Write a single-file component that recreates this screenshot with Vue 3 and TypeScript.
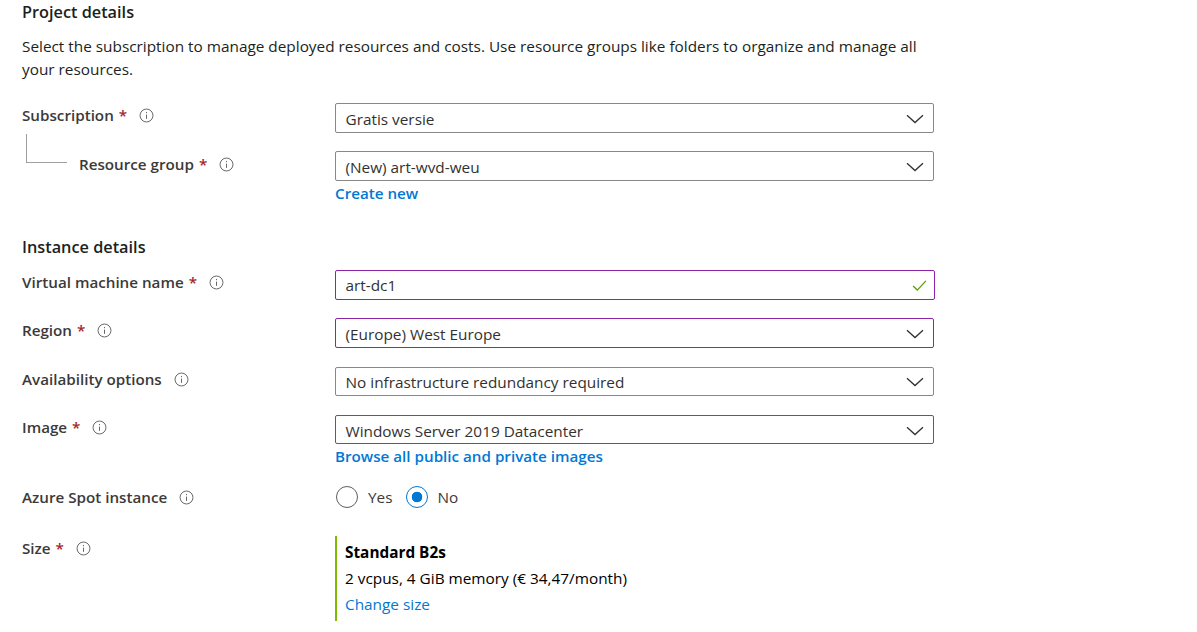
<script setup lang="ts">
interface Row { label: string; req: boolean; value: string; cls: string; sub?: boolean; link?: string; check?: boolean }
const project: Row[] = [
  { label: 'Subscription', req: true, value: 'Gratis versie', cls: 'r1' },
  { label: 'Resource group', req: true, value: '(New) art-wvd-weu', cls: 'r2', sub: true, link: 'Create new' },
]
const instance: Row[] = [
  { label: 'Virtual machine name', req: true, value: 'art-dc1', cls: 'r3 focus wide', check: true },
  { label: 'Region', req: true, value: '(Europe) West Europe', cls: 'r4 focus' },
  { label: 'Availability options', req: false, value: 'No infrastructure redundancy required', cls: 'r5' },
  { label: 'Image', req: true, value: 'Windows Server 2019 Datacenter', cls: 'r6 dark', link: 'Browse all public and private images' },
]
</script>

<template>
  <main class="page">
    <h2 class="h-project">Project details</h2>
    <p class="desc">Select the subscription to manage deployed resources and costs. Use resource groups like folders to organize and manage all your resources.</p>

    <div v-for="r in project" :key="r.label" class="row" :class="r.cls">
      <div class="label" :class="{ sub: r.sub }">
        <span v-if="r.sub" class="tree"></span>
        <span class="name">{{ r.label }}</span>
        <span v-if="r.req" class="req">*</span>
        <svg class="info" viewBox="0 0 16 16"><circle cx="8" cy="8" r="6.9" /><path d="M8 7v4.6M8 4.2v1.3" /></svg>
      </div>
      <div class="ctl">
        <div class="box"><span>{{ r.value }}</span>
          <svg class="chev" viewBox="0 0 18 10"><path d="M1 1.2l8 7.4 8-7.4" /></svg>
        </div>
        <a v-if="r.link" class="blink">{{ r.link }}</a>
      </div>
    </div>

    <h2 class="h-instance">Instance details</h2>

    <div v-for="r in instance" :key="r.label" class="row" :class="r.cls">
      <div class="label">
        <span class="name">{{ r.label }}</span>
        <span v-if="r.req" class="req">*</span>
        <svg class="info" viewBox="0 0 16 16"><circle cx="8" cy="8" r="6.9" /><path d="M8 7v4.6M8 4.2v1.3" /></svg>
      </div>
      <div class="ctl">
        <div class="box"><span>{{ r.value }}</span>
          <svg v-if="r.check" class="check" viewBox="0 0 16 12"><path d="M1 6.5l4.6 4.5L15 1" /></svg>
          <svg v-else class="chev" viewBox="0 0 18 10"><path d="M1 1.2l8 7.4 8-7.4" /></svg>
        </div>
        <a v-if="r.link" class="blink">{{ r.link }}</a>
      </div>
    </div>

    <div class="row r7">
      <div class="label">
        <span class="name">Azure Spot instance</span>
        <svg class="info" viewBox="0 0 16 16"><circle cx="8" cy="8" r="6.9" /><path d="M8 7v4.6M8 4.2v1.3" /></svg>
      </div>
      <div class="radios">
        <span class="radio"></span><span class="rtext">Yes</span>
        <span class="radio on"></span><span class="rtext">No</span>
      </div>
    </div>

    <div class="row r8">
      <div class="label">
        <span class="name">Size</span>
        <span class="req">*</span>
        <svg class="info" viewBox="0 0 16 16"><circle cx="8" cy="8" r="6.9" /><path d="M8 7v4.6M8 4.2v1.3" /></svg>
      </div>
      <div class="size">
        <strong>Standard B2s</strong>
        <span>2 vcpus, 4 GiB memory (€ 34,47/month)</span>
        <a>Change size</a>
      </div>
    </div>
  </main>
</template>

<style scoped>
.page {
  width: 1197px;
  height: 632px;
  box-sizing: border-box;
  padding: 0 0 0 22px;
  overflow: hidden;
  background: #fff;
  color: #252423;
  font-family: "Open Sans", "Noto Sans", sans-serif;
  font-size: 15.35px;
}
h2 {
  margin: 0;
  font-size: 16.3px;
  font-weight: 600;
  line-height: 24px;
  color: #201f1e;
}
.desc {
  width: 905px;
  margin: 11px 0 0;
  line-height: 23px;
  color: #201f1e;
}
.h-instance { margin-top: 30px; }
.row { display: flex; align-items: flex-start; }
.r1 { margin-top: 22px; }
.r2 { margin-top: 18px; }
.r3 { margin-top: 11px; }
.r4 { margin-top: 18px; }
.r5 { margin-top: 19px; }
.r6 { margin-top: 19px; }
.r7 { margin-top: 17px; }
.r8 { margin-top: 27px; }
.label {
  width: 313px;
  flex: none;
  display: flex;
  align-items: center;
  height: 24px;
  position: relative;
  font-size: 15.2px;
  font-weight: 600;
  color: #3b3a39;
}
.label.sub { padding-left: 57px; padding-top: 2px; box-sizing: border-box; }
.tree {
  position: absolute;
  left: 4px;
  top: -17px;
  width: 40px;
  height: 28px;
  border-left: 1px solid #a19f9d;
  border-bottom: 1px solid #a19f9d;
}
.req { color: #a4262c; margin-left: 5px; }
.info {
  width: 15px;
  height: 15px;
  margin-left: 12px;
  fill: none;
  stroke: #605e5c;
  stroke-width: 1;
}
.ctl { display: flex; flex-direction: column; align-items: flex-start; }
.box {
  width: 599px;
  height: 30px;
  box-sizing: border-box;
  border: 1px solid #8a8886;
  border-radius: 2px;
  padding: 2px 10px 0 9.5px;
  display: flex;
  align-items: center;
  justify-content: space-between;
  color: #323130;
}
.focus .box { border-color: #8e24aa; }
.dark .box { border-color: #605e5c; }
.wide .box { width: 600px; padding: 0 7px 0 9.5px; }
.r5 .box { height: 29px; padding-top: 0; }
.r6 .box { height: 29px; }
.chev {
  width: 18px;
  height: 10px;
  margin-right: -1px;
  fill: none;
  stroke: #323130;
  stroke-width: 1.3;
}
.check {
  width: 15px;
  height: 11px;
  fill: none;
  stroke: #57a300;
  stroke-width: 1.4;
}
.blink {
  line-height: 24px;
  font-size: 15.2px;
  font-weight: 600;
  color: #0078d4;
  white-space: nowrap;
}
.radios { display: flex; align-items: center; height: 24px; }
.radio {
  width: 22px;
  height: 22px;
  box-sizing: border-box;
  border: 1px solid #605e5c;
  border-radius: 50%;
  margin-left: 1px;
  background: #fff;
}
.radio.on {
  border-color: #0078d4;
  background: radial-gradient(circle, #0078d4 0 5px, #fff 5.6px);
}
.rtext { margin: 0 12px 0 10px; color: #3b3a39; }
.size {
  width: 599px;
  height: 85px;
  box-sizing: border-box;
  border-left: 2px solid #7fba00;
  padding: 3px 0 0 8px;
  display: flex;
  flex-direction: column;
  color: #000;
  line-height: 26px;
}
.size strong { font-weight: 700; color: #000; }
.size a { color: #0078d4; }
</style>
